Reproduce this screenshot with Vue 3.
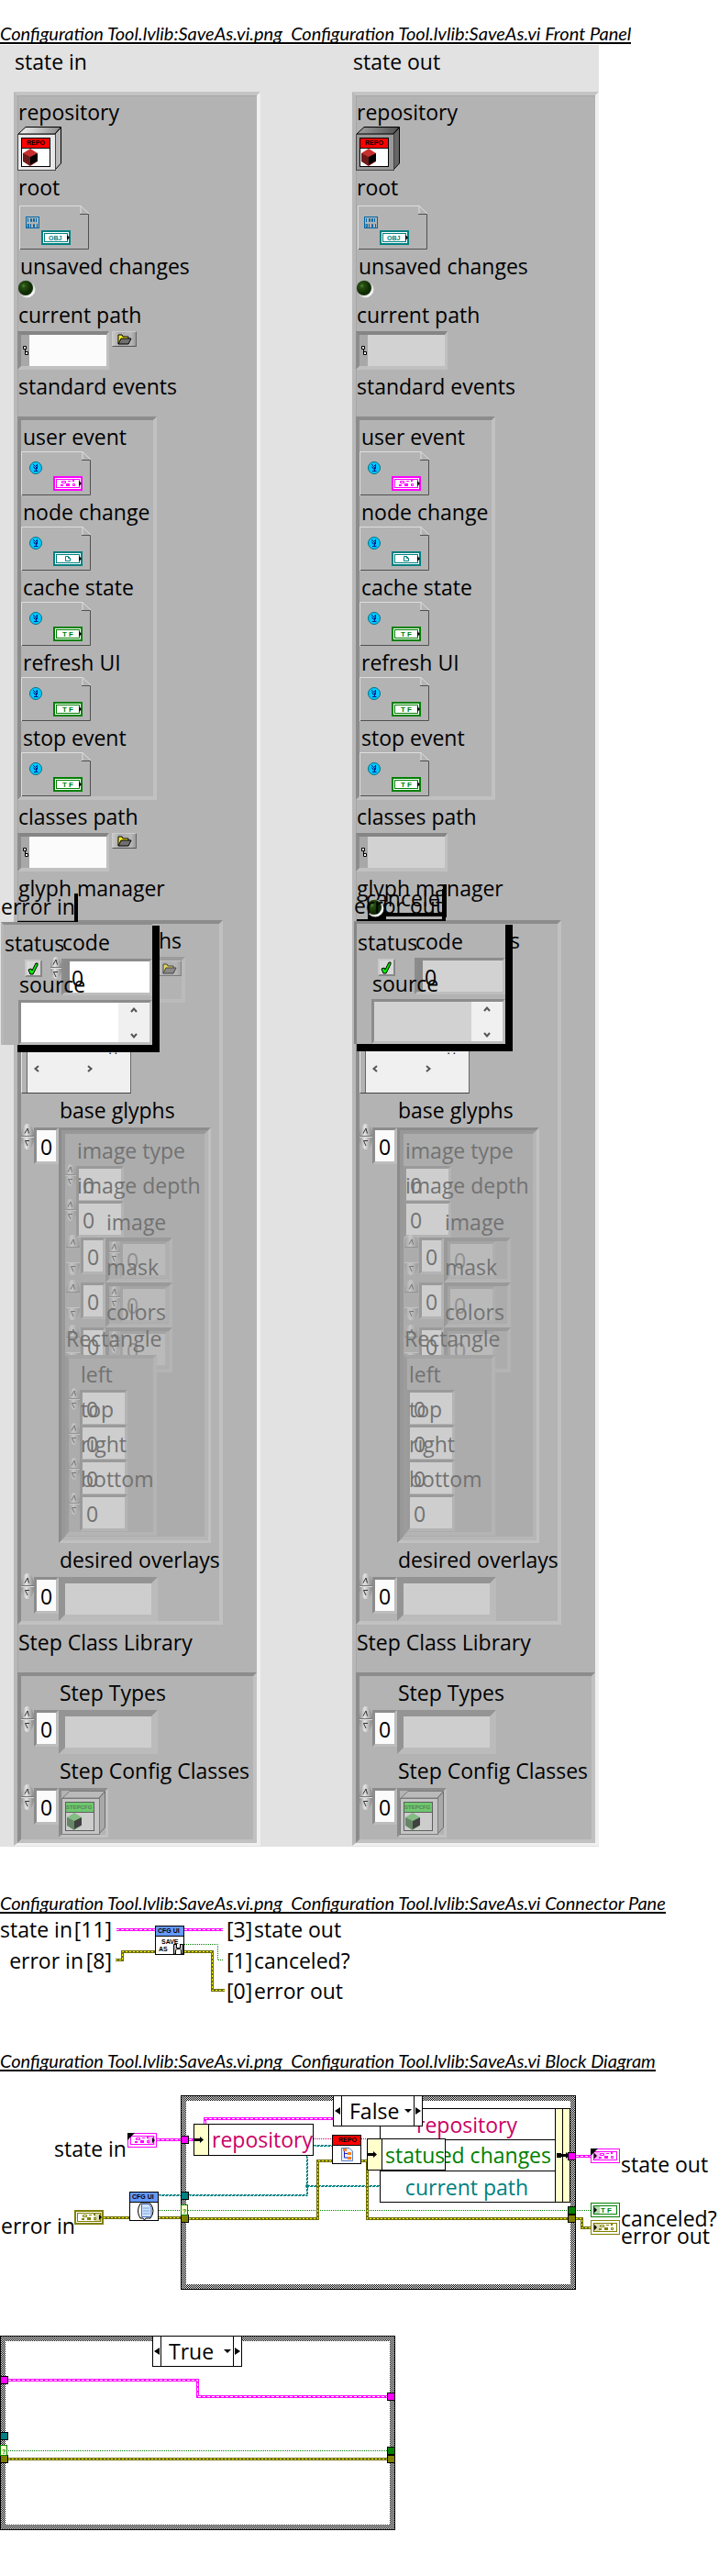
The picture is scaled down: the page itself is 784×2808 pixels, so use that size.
<script setup>
import { h } from 'vue'

const Spinner = (props) =>
  h('span', { class: ['spinner', props.kind] }, [
    h('button', { type: 'button', 'aria-label': 'increment' }, [
      h('svg', { viewBox: '0 0 8 8' }, [h('path', { d: 'M1 6.5L4 1L5.5 6.5' })]),
    ]),
    h('button', { type: 'button', 'aria-label': 'decrement' }, [
      h('svg', { viewBox: '0 0 8 8' }, [h('path', { d: 'M6 1.5H1.5L4 7' })]),
    ]),
  ])
Spinner.props = ['kind']

const base = 'Configuration Tool.lvlib:SaveAs.vi'
const heading = (part) => `${base}.png  ${base} ${part}`

const panels = [
  { id: 'in', name: 'state in', control: true },
  { id: 'out', name: 'state out', control: false },
]
const events = [
  { name: 'user event', icon: 'cluster', tone: 'pink' },
  { name: 'node change', icon: 'page', tone: 'teal' },
  { name: 'cache state', icon: 'bool', tone: 'green' },
  { name: 'refresh UI', icon: 'bool', tone: 'green' },
  { name: 'stop event', icon: 'bool', tone: 'green' },
]
const imageNumbers = ['image type', 'image depth']
const imageArrays = ['image', 'mask', 'colors']
const edges = ['left', 'top', 'right', 'bottom']
const errors = [
  { id: 'ein', name: 'error in', control: true },
  { id: 'eout', name: 'error out', control: false },
]

const tunnels = [
  [197, 68, 'pink'], [197, 129, 'teal'], [197, 154, 'olive'],
  [619, 86, 'pink'], [619, 145, 'green'], [619, 154, 'olive'],
  [0, 330, 'pink'], [0, 391, 'teal'], [0, 416, 'olive'],
  [422, 348, 'pink'], [422, 407, 'green'], [422, 416, 'olive'],
]
const pinkWires = [
  'M171 72.5H211', 'M223.5 55V49.5H400', 'M628 90.5H644', 'M9 334.5H215.5V352.5H422',
]
const errorWires = [
  'M113 157.5H141', 'M173 157.5H197', 'M206 158.5H346.5V95.5H362',
  'M394 95.5H400.5V158.5H620', 'M628 158.5H634.5V168.5H644', 'M9 420.5H422',
]
const tealWires = ['M173 132.5H197', 'M206 132.5H334.5V90', 'M335 122.5H414', 'M342 78.5H362']
</script>

<template>
  <main class="page">
    <svg class="defs" aria-hidden="true">
      <defs>
        <pattern id="checker" width="2" height="2" patternUnits="userSpaceOnUse">
          <rect width="2" height="2" fill="#fff" />
          <rect width="1" height="1" /><rect x="1" y="1" width="1" height="1" />
        </pattern>
        <linearGradient id="lid" x1="0" x2="1"><stop offset="0" stop-color="#f4f4f4" /><stop offset="1" stop-color="#8a8a8a" /></linearGradient>
        <linearGradient id="lidDark" x1="0" x2="1"><stop offset="0" stop-color="#a0a0a0" /><stop offset="1" stop-color="#505050" /></linearGradient>
        <radialGradient id="led" cx="0.35" cy="0.35"><stop offset="0" stop-color="#56803f" /><stop offset="0.3" stop-color="#265010" /><stop offset="1" stop-color="#0f2c04" /></radialGradient>
        <linearGradient id="ring" x1="0" y1="0" x2="1" y2="1"><stop offset="0.2" stop-color="#808080" /><stop offset="0.8" stop-color="#f6f6f6" /></linearGradient>

        <symbol id="cube" viewBox="0 0 16 19">
          <path d="M8 0L16 5V14L8 19L0 14V5Z" fill="currentColor" />
          <path d="M0 5L8 9V19L0 14Z" fill="#000" opacity=".45" />
          <path d="M16 5L8 9V18L16 13.5Z" fill="#000" />
        </symbol>
        <symbol id="sheet" viewBox="0 0 76 48">
          <path d="M.5 48V.5H67L76 9M67 .5V9.5" fill="none" stroke="#dedede" />
          <path d="M66 9.5H75.5V47.5H1" fill="none" stroke="#505050" />
        </symbol>
        <symbol id="dish" viewBox="0 0 14 14">
          <circle cx="7" cy="7" r="6.5" fill="#00c8ff" stroke="#067080" />
          <path d="M4 3.5H5M5 4L8.5 7.5M9 3L5.5 6.5M4.500 5.5L6 8H8.5V3M5 10.5H9.5M7.500 7V10" fill="none" stroke="#002090" />
        </symbol>
        <symbol id="frame" viewBox="0 0 32 16">
          <rect x="1" y="1" width="30" height="14" fill="#fff" stroke="currentColor" stroke-width="2" />
          <rect x="3.5" y="3.5" width="25" height="9" fill="none" stroke="currentColor" />
        </symbol>
        <symbol id="thin" viewBox="0 0 32 16">
          <rect x=".5" y=".5" width="31" height="15" fill="#fff" stroke="currentColor" />
          <rect x="3.5" y="3.5" width="25" height="9" fill="none" stroke="currentColor" />
        </symbol>
        <symbol id="cluster" viewBox="0 0 32 16">
          <path d="M9.5 5.5H13.5V7.5H9.5ZM21.5 8.5H23.5V10.5H21.5Z" fill="none" stroke="currentColor" />
          <path d="M16 5H19V6H16ZM21 4H23V6H21ZM8 9H11V11H8ZM14 8H18V11H14Z" fill="currentColor" />
        </symbol>
        <symbol id="page" viewBox="0 0 32 16">
          <path d="M13.5 5.5H16.5L18.5 7.5V10.5H13.5ZM16.5 5.5V7.5H18.5" fill="none" stroke="currentColor" />
        </symbol>
        <symbol id="bool" viewBox="0 0 32 16">
          <text x="10" y="11" class="tiny wide" fill="currentColor">T F</text>
        </symbol>
        <symbol id="folder" viewBox="0 0 16 12">
          <path d="M1 11V1H5L6 3H12V5" fill="#ffee20" stroke="#000" />
          <path d="M1 11L4 5H15L12 11Z" fill="#707070" stroke="#000" />
        </symbol>
        <symbol id="chevron" viewBox="0 0 8 8"><path d="M1 6L4 2.5L7 6" fill="none" stroke="#555" stroke-width="2" /></symbol>
      </defs>
    </svg>

    <h2 class="title">{{ heading('Front Panel') }}</h2>

    <section class="front">
      <div v-for="p in panels" :key="p.id" class="panel">
        <h3 class="label state">{{ p.name }}</h3>
        <div class="outer">
          <span class="label">repository</span>
          <svg class="klass" viewBox="0 0 48 48">
            <path d="M1 8L9 .5H47.5L41 8Z" :fill="p.control ? 'url(#lid)' : 'url(#lidDark)'" stroke="#000" />
            <path d="M41 8L47.5 1V40L41 47Z" :fill="p.control ? '#b8b8b8' : '#666'" stroke="#000" />
            <rect x=".5" y="8.5" width="41" height="39" :fill="p.control ? '#e8e8e8' : '#999'" stroke="#444" />
            <rect x="4.5" y="12.5" width="31" height="31" fill="#fff" stroke="#000" />
            <rect x="5" y="13" width="30" height="10" fill="#f00" />
            <path d="M4 23.5H36" stroke="#000" />
            <text x="10" y="20" class="tiny">REPO</text>
            <use href="#cube" x="6" y="24" width="16" height="19" color="#c83030" />
          </svg>
          <span class="label below-class">root</span>
          <svg class="sheet root" viewBox="0 0 76 48">
            <use href="#sheet" width="76" height="48" />
            <rect x="7.5" y="12.5" width="14" height="12" fill="none" stroke="#0068a8" />
            <path d="M9.5 14V18M18.5 14V18M12.5 14.5H13.5V17.5H12.5ZM15.5 14.5H16.5V17.5H15.5ZM12.5 20V24M19.5 20V24M9 20.5H10.5V23.5H9ZM15.5 20.5H16.5V23.5H15.5Z" fill="none" stroke="#0068a8" />
            <g class="teal"><use href="#frame" x="24" y="27" width="32" height="16" />
              <text x="32" y="38" class="tiny" fill="currentColor">OBJ</text></g>
            <path d="M52 32L55 35L52 38Z" />
          </svg>
          <span class="label led-label">unsaved changes</span>
          <svg class="led" viewBox="0 0 20 20"><circle cx="10" cy="10" r="9.5" fill="url(#ring)" /><circle cx="9" cy="9" r="8" fill="url(#led)" /></svg>
          <label class="label" :for="'cur-' + p.id">current path</label>
          <div class="path-row">
            <span class="path" :class="{ ro: !p.control }">
              <svg viewBox="0 0 8 12"><path d="M1.5 1.5H4.5V4.5H1.5ZM3.5 5V8.5M3.5 7.5H6.5V10.5H3.5Z" fill="#fff" stroke="#000" /></svg>
              <input :id="'cur-' + p.id" type="text" :readonly="!p.control" />
            </span>
            <button v-if="p.control" class="browse" type="button" aria-label="browse"><svg><use href="#folder" /></svg></button>
          </div>
          <span class="label">standard events</span>
          <div class="sunk events">
            <div v-for="e in events" :key="e.name" class="event">
              <span class="label">{{ e.name }}</span>
              <svg class="sheet" viewBox="0 0 76 48">
                <use href="#sheet" width="76" height="48" />
                <use href="#dish" x="9" y="11" width="14" height="14" />
                <g :class="e.tone"><use href="#frame" x="35" y="27" width="32" height="16" />
                  <use :href="'#' + e.icon" x="35" y="27" width="32" height="16" /></g>
                <path d="M63 32L66 35L63 38Z" />
              </svg>
            </div>
          </div>
          <label class="label" :for="'cls-' + p.id">classes path</label>
          <div class="path-row">
            <span class="path" :class="{ ro: !p.control }">
              <svg viewBox="0 0 8 12"><path d="M1.5 1.5H4.5V4.5H1.5ZM3.5 5V8.5M3.5 7.5H6.5V10.5H3.5Z" fill="#fff" stroke="#000" /></svg>
              <input :id="'cls-' + p.id" type="text" :readonly="!p.control" />
            </span>
            <button v-if="p.control" class="browse" type="button" aria-label="browse"><svg><use href="#folder" /></svg></button>
          </div>
          <span class="label">glyph manager</span>
          <div class="sunk glyphs">
            <span class="label glyph-paths">{{ p.control ? 'hs' : 's' }}</span>
            <div v-if="p.control" class="sunk path-array">
              <button class="browse" type="button" aria-label="browse"><svg><use href="#folder" /></svg></button>
            </div>
            <div class="listbox" :class="{ lone: !p.control }">
              <span class="dots">. .</span>
              <div class="hscroll">
                <button type="button" aria-label="scroll left"><svg class="west"><use href="#chevron" /></svg></button>
                <button type="button" aria-label="scroll right"><svg class="east"><use href="#chevron" /></svg></button>
              </div>
            </div>
            <span class="label indent">base glyphs</span>
            <div class="array">
              <Spinner />
              <input class="num index" value="0" aria-label="base glyphs index" />
              <div class="sunk double base" :class="{ narrow: !p.control }">
                <div class="faded">
                  <div v-for="n in imageNumbers" :key="n" class="item stack">
                    <label class="label" :for="n + p.id">{{ n }}</label>
                    <div class="numeric"><Spinner v-if="p.control" kind="small" /><input :id="n + p.id" class="num pale" value="0" /></div>
                  </div>
                  <div v-for="n in imageArrays" :key="n" class="item arr">
                    <label class="label" :for="n + p.id">{{ n }}</label>
                    <div class="numeric">
                      <Spinner kind="tall" />
                      <input :id="n + p.id" class="num index pale" value="0" />
                      <div class="sunk element"><Spinner v-if="p.control" kind="small" /><input class="num pale" value="0" :aria-label="n + ' element'" /></div>
                    </div>
                  </div>
                  <span class="label rect-label">Rectangle</span>
                  <div class="sunk rect">
                    <div v-for="n in edges" :key="n" class="item stack">
                      <label class="label" :for="n + p.id">{{ n }}</label>
                      <div class="numeric"><Spinner v-if="p.control" kind="small" /><input :id="n + p.id" class="num pale" value="0" /></div>
                    </div>
                  </div>
                </div>
              </div>
            </div>
            <span class="label indent">desired overlays</span>
            <div class="array">
              <Spinner /><input class="num index" value="0" aria-label="desired overlays index" />
              <input class="text-cell" type="text" disabled aria-label="desired overlay" />
            </div>
          </div>
          <span class="label library">Step Class Library</span>
          <div class="sunk steps">
            <span class="label indent">Step Types</span>
            <div class="array">
              <Spinner /><input class="num index" value="0" aria-label="step types index" />
              <input class="text-cell" type="text" disabled aria-label="step type" />
            </div>
            <span class="label indent">Step Config Classes</span>
            <div class="array">
              <Spinner /><input class="num index" value="0" aria-label="step classes index" />
              <div class="sunk slot">
                <svg class="klass" viewBox="0 0 48 48">
                  <path d="M1 8L9 .5H47.5L41 8Z" fill="#bbb" stroke="#777" />
                  <path d="M41 8L47.5 1V40L41 47Z" fill="#a8a8a8" stroke="#666" />
                  <rect x=".5" y="8.5" width="41" height="39" fill="#c8c8c8" stroke="#777" />
                  <rect x="4.5" y="12.5" width="31" height="31" fill="#d0d0d0" stroke="#555" />
                  <rect x="5" y="13" width="30" height="10" fill="#66cc66" />
                  <path d="M4 23.5H36" stroke="#555" />
                  <text x="5" y="20" class="tiny soft">STEPCFG</text>
                  <use href="#cube" x="6" y="24" width="16" height="19" color="#66b866" opacity=".75" />
                </svg>
              </div>
            </div>
          </div>
        </div>
      </div>

      <div class="canceled">
        <span class="label">cancele</span>
        <svg class="led" viewBox="0 0 20 20"><circle cx="10" cy="10" r="9.5" fill="url(#ring)" /><circle cx="9" cy="9" r="8" fill="url(#led)" /></svg>
      </div>

      <div v-for="e in errors" :key="e.id" class="error" :class="e.id">
        <span class="label error-name">{{ e.name }}</span>
        <div class="error-body">
          <label class="label status" :for="e.id + '-s'">status</label>
          <label class="label code" :for="e.id + '-c'">code</label>
          <span class="check">
            <input :id="e.id + '-s'" type="checkbox" checked />
            <svg viewBox="0 0 12 14"><path d="M1 8L4 7L5 9L9 1H11V3L6 13H3Z" fill="#00f000" stroke="#000" /></svg>
          </span>
          <Spinner v-if="e.control" kind="small" />
          <input :id="e.id + '-c'" class="num code-box" :class="{ ro: !e.control }" value="0" />
          <label class="label source" :for="e.id + '-t'">source</label>
          <div class="source-box" :class="{ ro: !e.control }">
            <textarea :id="e.id + '-t'"></textarea>
            <div class="vscroll">
              <button type="button" aria-label="scroll up"><svg><use href="#chevron" /></svg></button>
              <button type="button" aria-label="scroll down"><svg class="south"><use href="#chevron" /></svg></button>
            </div>
          </div>
        </div>
      </div>
    </section>

    <h2 class="title later">{{ heading('Connector Pane') }}</h2>
    <section class="connector">
      <svg class="canvas" aria-label="connector pane">
        <path class="w-pink" d="M127 17.5H169M201 17.5H243" />
        <path class="w-pink in" d="M127 17.5H169M201 17.5H243" />
        <path class="w-err" d="M126 50.5H133.5V41.5H169M201 41.5H231.5V83.5H245" />
        <path class="w-err in" d="M126 50.5H133.5V41.5H169M201 41.5H231.5V83.5H245" />
        <path class="w-bool" d="M201 33.5H237.5V50.5H243" />
        <g transform="translate(169 13)">
          <rect x=".5" y=".5" width="31" height="31" fill="#fff" stroke="#000" />
          <rect x="1" y="1" width="30" height="10" fill="#6699ff" /><path d="M0 11.5H32" stroke="#000" />
          <text x="3" y="8" class="tiny">CFG UI</text>
          <text x="7" y="20" class="tiny">SAVE</text><text x="4" y="28" class="tiny">AS</text>
          <path d="M20.5 20.5H30.5V31H20.5Z" fill="#bbb" stroke="#000" /><path d="M23.5 20V24.5H27.5V20M22.5 31V27L24 25.5H27L28.5 27V31" fill="#fff" stroke="#000" />
        </g>
        <g class="word">
          <text x="122" y="26" text-anchor="end">[11]</text><text x="79" y="26" text-anchor="end">state in</text>
          <text x="122" y="60" text-anchor="end">[8]</text><text x="91" y="60" text-anchor="end">error in</text>
          <text x="247" y="26">[3]</text><text x="277" y="26">state out</text>
          <text x="247" y="60">[1]</text><text x="277" y="60">canceled?</text>
          <text x="247" y="93">[0]</text><text x="277" y="93">error out</text>
        </g>
      </svg>
    </section>

    <h2 class="title">{{ heading('Block Diagram') }}</h2>
    <section class="diagram">
      <svg class="canvas" aria-label="block diagram">
        <g>
          <rect x="197.5" y="24.5" width="430" height="211" fill="url(#checker)" stroke="#000" />
          <rect x="203" y="30" width="419" height="200" fill="#fff" />
          <rect x=".5" y="286.5" width="430" height="211" fill="url(#checker)" stroke="#000" />
          <rect x="6" y="292" width="419" height="200" fill="#fff" />
        </g>
        <g v-for="w in tealWires" :key="w"><path class="w-teal" :d="w" /><path class="w-teal alt" :d="w" transform="translate(1 1)" /></g>
        <circle cx="335" cy="123" r="2" class="teal" fill="currentColor" />
        <path class="w-bool" d="M173 149.5H644M9 411.5H422" />
        <path class="w-ref" d="M342 71.5H362M394 71.5H400" />
        <path v-for="w in pinkWires" :key="w" class="w-pink" :d="w" />
        <path v-for="w in pinkWires" :key="w + 'i'" class="w-pink in" :d="w" />
        <path v-for="w in errorWires" :key="w" class="w-err" :d="w" />
        <path v-for="w in errorWires" :key="w + 'i'" class="w-err in" :d="w" />

        <rect v-for="(t, i) in tunnels" :key="i" :x="t[0] + 0.5" :y="t[1] + 0.5" width="8" height="8" :class="t[2]" fill="currentColor" stroke="#000" />
        <g class="green">
          <rect x="197.5" y="143.5" width="7" height="11" fill="#ffffcc" stroke="currentColor" />
          <text x="199" y="153" class="tiny" fill="currentColor">?</text>
          <rect x=".5" y="405.5" width="7" height="11" fill="#ffffcc" stroke="currentColor" />
          <text x="2" y="415" class="tiny" fill="currentColor">?</text>
        </g>

        <g class="pink"><use href="#thin" x="139" y="65" width="32" height="16" /><rect x="161" y="68" width="8" height="10" fill="currentColor" opacity=".3" /><use href="#cluster" x="139" y="65" width="32" height="16" /></g>
        <path d="M139 65H147L139 73ZM166 70L169 73L166 76Z" />
        <g class="olive"><use href="#frame" x="81" y="149" width="32" height="16" /><rect x="103" y="152" width="8" height="10" fill="currentColor" opacity=".3" /><use href="#cluster" x="81" y="149" width="32" height="16" /></g>
        <path d="M108 154L111 157L108 160Z" />
        <g class="pink"><use href="#thin" x="644" y="82" width="32" height="16" /><rect x="646" y="85" width="8" height="10" fill="currentColor" opacity=".3" /><use href="#cluster" x="645" y="82" width="32" height="16" /></g>
        <path d="M644 82H652L644 90ZM648 87L651 90L648 93Z" />
        <g class="green"><use href="#thin" x="644" y="141" width="32" height="16" /><rect x="646" y="144" width="8" height="10" fill="currentColor" opacity=".3" /><use href="#bool" x="645" y="141" width="32" height="16" /></g>
        <path d="M648 146L651 149L648 152Z" />
        <g class="olive"><use href="#thin" x="644" y="160" width="32" height="16" /><rect x="646" y="163" width="8" height="10" fill="currentColor" opacity=".3" /><use href="#cluster" x="645" y="160" width="32" height="16" /></g>
        <path d="M648 165L651 168L648 171Z" />

        <g transform="translate(141 129)">
          <rect x=".5" y=".5" width="31" height="31" fill="#fff" stroke="#000" />
          <rect x="1" y="1" width="30" height="10" fill="#6699ff" /><path d="M0 11.5H32" stroke="#000" />
          <text x="3" y="8" class="tiny">CFG UI</text>
          <path d="M12 13Q7 21 12 29H15L16.5 31L18 29H23Q29 21 23 13Z" fill="#fff" stroke="#000" />
          <path d="M13.5 13.5H21L24 17V27.5H13.5Z" fill="#cfe4ff" stroke="#4468b0" /><path d="M15 18H22M15 21H22M15 24H22" stroke="#78a0e0" />
        </g>
        <g transform="translate(362 67)">
          <rect x=".5" y=".5" width="31" height="31" fill="#fff" stroke="#000" />
          <rect x="1" y="1" width="30" height="10" fill="#f00" /><path d="M0 11.5H32" stroke="#000" />
          <text x="7" y="8" class="tiny">REPO</text>
          <path d="M10.5 14.5H19L22.5 18V28.5H10.5Z" fill="#e8f0ff" stroke="#6080c0" />
          <path d="M13.5 17V25H18M13.5 20.5H18" fill="none" stroke="#2020c0" />
          <path d="M12 15H16V18H12ZM17 19H21V22H17ZM17 24H21V27H17Z" fill="#ff8020" />
        </g>

        <g stroke="#000">
          <rect x="211.5" y="55.5" width="130" height="34" fill="#fff" /><rect x="211.5" y="55.5" width="16" height="34" fill="#ffffcc" />
          <rect x="414.5" y="38.5" width="207" height="102" fill="#fff" />
          <rect x="605.5" y="38.5" width="8" height="102" fill="#ffffcc" /><rect x="613.5" y="38.5" width="8" height="102" fill="#ffffcc" />
          <path d="M414 72.5H605M414 106.5H605" />
        </g>
        <g class="word">
          <text x="231" y="81" class="ref">repository</text>
          <text x="509" y="65" class="ref" text-anchor="middle">repository</text>
          <text x="601" y="98" class="green" text-anchor="end">unsaved changes</text>
          <text x="509" y="133" class="teal" text-anchor="middle">current path</text>
        </g>
        <g stroke="#000"><rect x="400.5" y="71.5" width="85" height="34" fill="#fff" /><rect x="400.5" y="71.5" width="16" height="34" fill="#ffffcc" /></g>
        <path d="M212 71H218V69L222 72.5L218 76V74H212ZM401 87H407V85L411 88.5L407 92V90H401ZM608 88H617V86L621 89.5L617 93V91H608ZM607 87H612V92H607Z" />
        <rect x="619.5" y="86.5" width="8" height="8" class="pink" fill="currentColor" stroke="#000" />
        <g class="word">
          <text x="420" y="98" class="green">status</text>
          <text x="59" y="91">state in</text>
          <text x="1" y="175">error in</text>
          <text x="677" y="108">state out</text>
          <text x="677" y="167">canceled?</text>
          <text x="677" y="186">error out</text>
        </g>
      </svg>
      <div v-for="c in ['False', 'True']" :key="c" class="selector" :class="c.toLowerCase()">
        <button type="button" aria-label="previous case"><svg viewBox="0 0 6 8"><path d="M6 0V8L0 4Z" /></svg></button>
        <select :aria-label="c + ' case'"><option>{{ c }}</option></select>
        <svg class="drop" viewBox="0 0 8 4"><path d="M0 0H8L4 4Z" /></svg>
        <button type="button" aria-label="next case"><svg viewBox="0 0 6 8"><path d="M0 0V8L6 4Z" /></svg></button>
      </div>
    </section>
  </main>
</template>

<style>
body { background: #fff; }
.spinner { display: flex; flex-direction: column; flex: none; width: 14px; height: 28px; justify-content: space-between; }
.spinner button {
  display: flex; justify-content: center; align-items: flex-end; width: 100%; height: 50%; padding: 0 0 1px;
  border: 0; border-bottom: 1px solid #777; border-radius: 7px 7px 0 0 / 13px 13px 0 0;
  background: linear-gradient(90deg, #909090, #e4e4e4 40%, #858585);
}
.spinner button + button { align-items: flex-start; padding: 2px 0 0; border-bottom: 0; border-top: 1px solid #ddd; border-radius: 0 0 7px 7px / 0 0 13px 13px; }
.spinner svg { width: 8px; height: 8px; }
.spinner path { fill: none; stroke: #333; }
.spinner.small { width: 12px; height: 24px; }
.spinner.tall { height: 44px; }
.spinner.tall button { height: 14px; }
</style>

<style scoped>
.page { width: 100%; color: #000; font-family: "Open Sans", "Noto Sans", sans-serif; font-size: 23px; overflow: hidden; }
.page button, .page input, .page select, .page textarea { margin: 0; box-sizing: border-box; font: inherit; border-radius: 0; outline: none; }
.defs { position: absolute; width: 0; height: 0; }
.title {
  width: fit-content; height: 24px; margin: 22px 0 0; overflow: hidden; border-bottom: 2px solid #000;
  font: italic 400 20px/28px Lato, sans-serif; white-space: pre;
}
.title.later { margin-top: 47px; }
.label { display: block; margin: 0; font-size: 23px; font-weight: 400; line-height: 30px; white-space: nowrap; color: inherit; }
.tiny { font: bold 7px "Liberation Sans", sans-serif; }
.wide { font-size: 8px; white-space: pre; }
.soft { font-size: 6px; fill: #557755; }
.pink { color: #f0f; } .teal { color: #008080; } .green { color: #008000; } .olive { color: #808000; }

.front { position: relative; display: flex; gap: 100px; width: fit-content; margin-top: 1px; padding: 3px 0 1px 15px; background: #e2e2e2; }
.panel { width: 269px; }
.state { padding-left: 1px; margin-bottom: 18px; }
.outer {
  display: flex; flex-direction: column; align-items: flex-start; padding-top: 3px;
  border: 4px solid; border-color: #c4c4c4 #f0f0f0 #f0f0f0 #b8b8b8; border-bottom-width: 3px; background: #b3b3b3;
  box-shadow: inset 1px 1px 0 #a6a6a6;
}
.outer > .label { padding-left: 1px; }
.klass { display: block; width: 48px; height: 48px; margin-top: 1px; }
.outer > .below-class { margin-top: 3px; }
.sheet { display: block; width: 76px; height: 48px; margin-top: 1px; }
.root { margin: 5px 0 0 2px; }
.outer > .led-label { margin-top: 3px; padding-left: 3px; }
.led { display: block; width: 20px; height: 20px; margin-bottom: 3px; }
.path-row { display: flex; align-items: flex-start; gap: 3px; margin: 3px 0; }
.path { display: flex; width: 100px; height: 42px; box-sizing: border-box; border: 4px solid; border-color: #858585 #c0c0c0 #c0c0c0 #8d8d8d; border-right-width: 3px; background: #a8a8a8; }
.path svg { width: 8px; height: 12px; margin: 11px 0 0 1px; }
.page .path input { flex: 1; min-width: 0; padding: 0; border: 0; background: #fbfbfb; }
.page .path.ro input { background: #d2d2d2; }
.page .browse { display: flex; align-items: center; justify-content: center; width: 27px; height: 17px; padding: 0; border: 1px solid; border-color: #ccc #666 #555 #ccc; background: linear-gradient(90deg, #c8c8c8, #aaa 30%, #b8b8b8 80%, #999); }
.browse svg { width: 16px; height: 12px; }
.sunk { box-sizing: border-box; border: 4px solid; border-color: #8c8c8c #c1c1c1 #c1c1c1 #8c8c8c; background: #b3b3b3; }
.events { width: 152px; margin: 18px 0 3px; padding-top: 3px; }
.event + .event { margin-top: 3px; }
.event .label { padding-left: 2px; }
.glyphs { display: flex; flex-direction: column; align-items: flex-start; width: 224px; margin-top: 20px; padding: 3px 0 0; }
.glyph-paths { margin-left: auto; padding-right: 41px; }
.path-array { display: flex; width: 179px; height: 50px; margin: 3px 0 0; align-items: flex-start; justify-content: flex-end; opacity: .6; }
.listbox { display: flex; flex-direction: column; width: 118px; height: 94px; margin-top: 3px; border: 1px solid; border-color: #e8e8e8 #666 #444 #e8e8e8; background: #f0f0f0; box-shadow: inset 5px 0 0 #b3b3b3, inset 6px 0 0 #666; }
.listbox.lone { margin-top: 56px; }
.dots { height: 46px; margin: 28px 0 -17px auto; padding-right: 14px; font-size: 12px; line-height: 40px; }
.hscroll { display: flex; gap: 42px; margin: 0 0 0 8px; }
.page .hscroll button, .page .vscroll button { display: flex; align-items: center; justify-content: center; width: 16px; height: 22px; padding: 0; border: 0; background: none; }
.hscroll svg, .vscroll svg { width: 8px; height: 8px; }
.west { transform: rotate(-90deg); } .east { transform: rotate(90deg); } .south { transform: rotate(180deg); }
.indent { margin-top: 3px; padding-left: 42px; }
.array { display: flex; align-items: flex-start; margin-top: 4px; }
.array > .spinner { margin-top: -4px; }
.page .num { width: 52px; height: 40px; padding: 2px 0 0 4px; border: 3px solid; border-color: #8c8c8c #bdbdbd #bdbdbd #8c8c8c; background: #fbfbfb; color: #000; line-height: 30px; }
.page .num.index { width: 27px; }
.sunk.double { border-width: 3px; }
.base { width: 166px; }
.base.narrow { width: 155px; }
.faded { display: flex; flex-direction: column; align-items: flex-start; padding: 3px 0 1px; border: 4px solid; border-color: #989898 #b6b6b6 #b6b6b6 #989898; background: #acacac; color: #727272; }
.page .num.pale { background: #cecece; color: #727272; border-color: #9a9a9a #b4b4b4 #b4b4b4 #9a9a9a; }
.faded .spinner { opacity: .45; }
.item { display: flex; flex-direction: column; align-items: flex-start; }
.item .numeric { display: flex; align-items: flex-start; margin-top: 2px; }
.stack .label { padding-left: 13px; }
.stack + .stack { margin-top: -34px; }
.narrow .stack .label { padding-left: 2px; }
.numeric .small { margin-top: -2px; }
.arr { margin-top: -32px; }
.arr .label { padding-left: 45px; }
.arr .tall { width: 15px; margin: -3px 1px 0 1px; }
.sunk.element { display: flex; width: 73px; height: 49px; background: #acacac; border-color: #9a9a9a #b4b4b4 #b4b4b4 #9a9a9a; }
.element .small { margin-top: 0; }
.page .element .num { background: #bababa; color: #909090; border-color: #a4a4a4 #b0b0b0 #b0b0b0 #a4a4a4; }
.rect-label { position: relative; margin-top: -52px; padding-left: 1px; }
.sunk.rect { position: relative; width: 100px; margin-top: 3px; padding: 2px 0 1px; border-color: #a4a4a4 #b4b4b4 #b4b4b4 #9c9c9c; background: #acacac; }
.page .text-cell { width: 108px; height: 48px; border: 7px solid; border-color: #949494 #bbb #bbb #949494; background: #cecece; }
.outer > .library { margin-top: 4px; }
.steps { width: 261px; margin-top: 18px; padding: 0 0 2px; }
.steps .label { margin-top: 3px; }
.slot { border-width: 3px; }
.slot .klass { margin-top: 0; opacity: .9; }

.error { position: absolute; left: 1px; top: 923px; width: 165px; }
.error.eout { left: 386px; top: 922px; }
.error-name { position: absolute; left: 0; top: 1px; }
.error::before { content: ""; position: absolute; left: 18px; top: 2px; width: 62px; height: 30px; border: solid #000; border-width: 0 4px 4px 0; }
.error.eout::before { left: 3px; top: -2px; width: 93px; height: 33px; }
.error::after { content: ""; position: absolute; left: 18px; top: 37px; right: -8px; height: 138px; background: #000; z-index: 0; }
.error.eout::after { left: 3px; }
.error-body { position: absolute; left: 0; top: 33px; z-index: 1; width: 165px; height: 134px; box-sizing: border-box; border-top: 3px solid #8c8c8c; border-left: 3px solid #b8b8b8; background: #b3b3b3; }
.error.eout .error-body { border-left-color: #858585; }
.error-body > * { position: absolute; }
.status { left: 1px; top: 5px; }
.code { left: 64px; top: 4px; }
.check { left: 23px; top: 38px; width: 19px; height: 19px; }
.page .check input { display: block; appearance: none; width: 19px; height: 19px; border: 2px solid; border-color: #c8c8c8 #888 #888 #c8c8c8; background: #d8d8d8; }
.check svg { position: absolute; left: 3px; top: 3px; width: 12px; height: 14px; }
.error-body .spinner { left: 51px; top: 35px; }
.page .code-box { left: 63px; top: 37px; width: 99px; padding-left: 8px; background: linear-gradient(90deg, #8a8a8a 6px, #fff 6px); }
.page .code-box.ro { background: linear-gradient(90deg, #8a8a8a 6px, #d2d2d2 6px); }
.source { left: 17px; top: 50px; }
.source-box { display: flex; left: 16px; top: 82px; width: 146px; height: 49px; box-sizing: border-box; border: 3px solid; border-color: #8c8c8c #bdbdbd #bdbdbd #8c8c8c; background: #fff; }
.source-box textarea { flex: 1; min-width: 0; resize: none; border: 0; padding: 0; background: none; }
.source-box.ro { background: #d2d2d2; }
.vscroll { display: flex; flex-direction: column; justify-content: space-between; align-items: center; width: 34px; background: #f0f0f0; }
.page .vscroll button { height: 15px; }
.canceled { position: absolute; left: 399px; top: 915px; width: 88px; height: 36px; box-sizing: border-box; border-right: 4px solid #000; }
.canceled::before { content: ""; position: absolute; left: 2px; bottom: -3px; width: 20px; height: 16px; background: #000; }
.canceled::after { content: ""; position: absolute; left: 22px; right: 0; bottom: 1px; height: 4px; background: #000; }
.canceled .led { position: absolute; left: 0; top: 16px; }

.connector { height: 126px; }
.connector + .title { margin-top: 20px; }
.diagram { position: relative; height: 548px; margin-top: 2px; }
.canvas { display: block; width: 100%; height: 100%; overflow: visible; }
.word text { font-size: 23px; fill: #000; }
.word .ref { fill: #cc0066; } .word .green { fill: #008000; } .word .teal { fill: #008080; }
.w-pink { fill: none; stroke: #f0f; stroke-width: 3px; }
.w-pink.in { stroke: #fff; stroke-width: 1px; stroke-dasharray: 3 2; }
.w-err { fill: none; stroke: #6c6c00; stroke-width: 3px; }
.w-err.in { stroke: #ff0; stroke-width: 1px; stroke-dasharray: 2 2; }
.w-teal { fill: none; stroke: #008080; stroke-dasharray: 3 1; }
.w-teal.alt { stroke-dashoffset: 2px; }
.w-bool { fill: none; stroke: #008000; stroke-dasharray: 1 1; }
.w-ref { fill: none; stroke: #cc0066; stroke-dasharray: 1 1; }
.selector { position: absolute; display: flex; box-sizing: border-box; width: 98px; height: 34px; border: 1px solid #000; background: #fff; }
.selector.false { left: 363px; top: 24px; }
.selector.true { left: 166px; top: 286px; }
.page .selector button { display: flex; align-items: center; justify-content: center; width: 8px; padding: 0; border: 0; background: #fff; }
.selector button svg { flex: none; width: 6px; height: 8px; }
.page .selector select { appearance: none; width: 80px; padding: 0 0 0 8px; border: solid #000; border-width: 0 1px; background: #fff; color: #000; }
.drop { position: absolute; right: 11px; top: 14px; width: 8px; height: 4px; }
</style>
